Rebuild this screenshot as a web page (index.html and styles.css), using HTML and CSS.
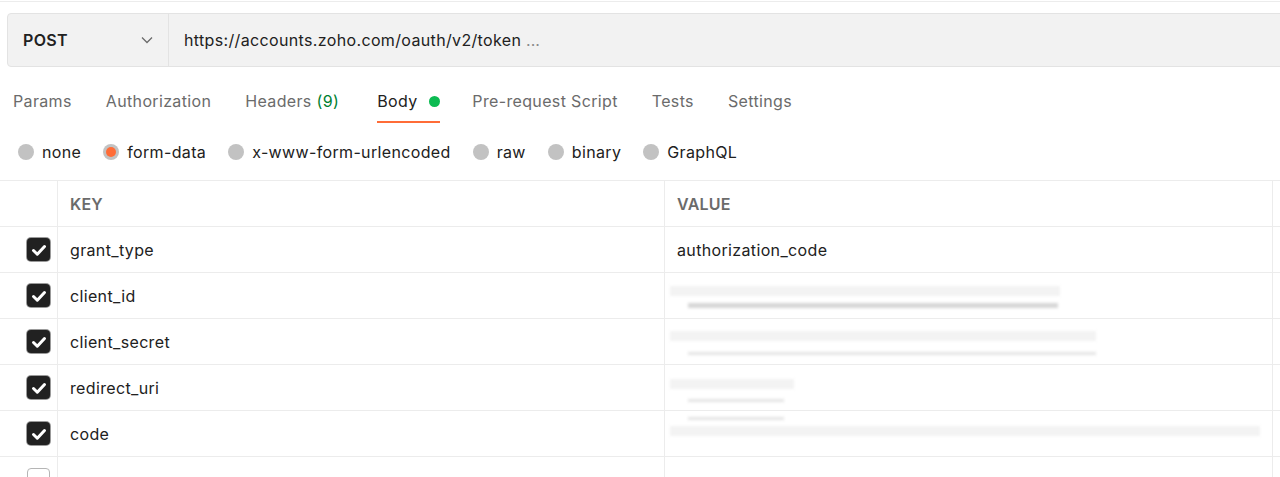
FILE: index.html
```html
<!DOCTYPE html>
<html>
<head>
<meta charset="utf-8">
<link rel="stylesheet" href="styles.css">
</head>
<body>
<div class="topline"></div>
<div class="reqbar">
  <div class="method">
    <span class="method-name">POST</span>
    <svg class="chev" width="12" height="8" viewBox="0 0 12 8"><path d="M1 1.5 L6 6.5 L11 1.5" fill="none" stroke="#6b6b6b" stroke-width="1.3"/></svg>
  </div>
  <div class="url">https://accounts.zoho.com/oauth/v2/token <span class="dots">...</span></div>
</div>
<nav class="tabs">
  <div class="tab">Params</div>
  <div class="tab">Authorization</div>
  <div class="tab">Headers <span class="count">(9)</span></div>
  <div class="tab active">Body <span class="dot"></span></div>
  <div class="tab">Pre-request Script</div>
  <div class="tab">Tests</div>
  <div class="tab">Settings</div>
</nav>
<div class="radios">
  <label class="radio"><span class="circle"></span>none</label>
  <label class="radio"><span class="circle on"></span>form-data</label>
  <label class="radio"><span class="circle"></span>x-www-form-urlencoded</label>
  <label class="radio"><span class="circle"></span>raw</label>
  <label class="radio"><span class="circle"></span>binary</label>
  <label class="radio"><span class="circle"></span>GraphQL</label>
</div>
<div class="table">
  <div class="cell chk"></div><div class="cell head">KEY</div><div class="cell head">VALUE</div><div class="cell end"></div>

  <div class="cell chk"><span class="box"><svg width="22" height="22" viewBox="0 0 22 22"><path d="M5.5 11.5 L9.3 15.2 L16.5 7.5" fill="none" stroke="#fff" stroke-width="3" stroke-linecap="round" stroke-linejoin="round"/></svg></span></div>
  <div class="cell">grant_type</div><div class="cell">authorization_code</div><div class="cell end"></div>

  <div class="cell chk"><span class="box"><svg width="22" height="22" viewBox="0 0 22 22"><path d="M5.5 11.5 L9.3 15.2 L16.5 7.5" fill="none" stroke="#fff" stroke-width="3" stroke-linecap="round" stroke-linejoin="round"/></svg></span></div>
  <div class="cell">client_id</div>
  <div class="cell blurcell">
    <div class="blur b-row2">
      <div class="bar faint w390"></div>
      <div class="bar dark w370 ind"></div>
    </div>
  </div>
  <div class="cell end"></div>

  <div class="cell chk"><span class="box"><svg width="22" height="22" viewBox="0 0 22 22"><path d="M5.5 11.5 L9.3 15.2 L16.5 7.5" fill="none" stroke="#fff" stroke-width="3" stroke-linecap="round" stroke-linejoin="round"/></svg></span></div>
  <div class="cell">client_secret</div>
  <div class="cell blurcell">
    <div class="blur b-row3">
      <div class="bar faint w426"></div>
      <div class="bar mid w408 ind"></div>
    </div>
  </div>
  <div class="cell end"></div>

  <div class="cell chk"><span class="box"><svg width="22" height="22" viewBox="0 0 22 22"><path d="M5.5 11.5 L9.3 15.2 L16.5 7.5" fill="none" stroke="#fff" stroke-width="3" stroke-linecap="round" stroke-linejoin="round"/></svg></span></div>
  <div class="cell">redirect_uri</div>
  <div class="cell blurcell">
    <div class="blur b-row4">
      <div class="bar faint w124"></div>
      <div class="bar mid w96 ind"></div>
    </div>
  </div>
  <div class="cell end"></div>

  <div class="cell chk"><span class="box"><svg width="22" height="22" viewBox="0 0 22 22"><path d="M5.5 11.5 L9.3 15.2 L16.5 7.5" fill="none" stroke="#fff" stroke-width="3" stroke-linecap="round" stroke-linejoin="round"/></svg></span></div>
  <div class="cell">code</div>
  <div class="cell blurcell">
    <div class="blur b-row5">
      <div class="bar mid w96 ind"></div>
      <div class="bar faint w590"></div>
    </div>
  </div>
  <div class="cell end"></div>

  <div class="cell chk"><span class="box empty"></span></div>
  <div class="cell"></div><div class="cell"></div><div class="cell end"></div>
</div>
</body>
</html>
```
FILE: styles.css
```css
* { box-sizing: border-box; }
html, body { margin: 0; padding: 0; background: #fff; overflow: hidden; }
body {
  font-family: Inter, "Noto Sans", sans-serif;
  font-size: 16px;
  letter-spacing: 0.35px;
  color: #212121;
  width: 1280px;
  height: 477px;
}
.topline {
  height: 2px;
  border-bottom: 1px solid #ececec;
}
.reqbar {
  margin: 11px -20px 0 7px;
  height: 54px;
  display: flex;
  background: #f2f2f2;
  border: 1px solid #e3e3e3;
  border-radius: 4px;
}
.method {
  width: 161px;
  display: flex;
  align-items: center;
  justify-content: space-between;
  padding: 0 15px 0 15px;
  border-right: 1px solid #e3e3e3;
}
.method-name { font-weight: 600; font-size: 16px; color: #212121; }
.chev { display: block; }
.url {
  display: flex;
  align-items: center;
  padding-left: 15px;
  color: #212121;
  white-space: pre;
}
.dots { color: #8a8a8a; letter-spacing: 0; }
.tabs {
  display: flex;
  gap: 34px;
  padding-left: 13px;
  margin-top: 10px;
}
.tab {
  padding: 12px 0 8px;
  line-height: 24px;
  border-bottom: 2px solid transparent;
  color: #6b6b6b;
  display: flex;
  align-items: center;
  white-space: pre;
}
.tab.active { color: #212121; border-bottom-color: #ff6c37; margin-left: 4px; margin-right: -2px; }
.count { color: #007f31; }
.dot {
  width: 11px; height: 11px; border-radius: 50%;
  background: #0cbb52; margin-left: 7px;
}
.radios {
  display: flex;
  gap: 22px;
  padding-left: 18px;
  margin-top: 17px;
  height: 24px;
}
.radio {
  display: flex;
  align-items: center;
  gap: 8px;
  color: #212121;
  line-height: 24px;
}
.circle {
  width: 16px; height: 16px; border-radius: 50%;
  background: #c2c2c2;
  display: inline-flex; align-items: center; justify-content: center;
}
.circle.on::after {
  content: "";
  width: 10px; height: 10px; border-radius: 50%;
  background: #ff6c37;
}
.table {
  margin-top: 16px;
  display: grid;
  grid-template-columns: 58px 607px 608px 1fr;
  grid-auto-rows: 46px;
  border-top: 1px solid #ececec;
}
.cell {
  border-bottom: 1px solid #ececec;
  border-right: 1px solid #ececec;
  display: flex;
  align-items: center;
  padding-left: 12px;
  color: #212121;
}
.cell.end { border-right: none; padding: 0; }
.cell.chk { padding: 0 7px 0 0; justify-content: flex-end; }
.head { font-weight: 600; color: #6b6b6b; font-size: 16px; letter-spacing: 0.2px; }
.box {
  width: 23px; height: 23px; border-radius: 4px;
  background: #212121;
  box-shadow: 0 0 0 1px #9a9a9a;
  display: flex; align-items: center; justify-content: center;
}
.box svg { display: block; }
.box.empty {
  background: #fff;
  box-shadow: none;
  border: 1.5px solid #b5b5b5;
}
.blurcell { padding-left: 5px; align-items: flex-start; }
.blur {
  filter: blur(1.6px);
  display: flex;
  flex-direction: column;
}
.bar { height: 6px; }
.bar.faint { background: #f3f3f3; height: 10px; }
.bar.dark { background: #d6d6d6; height: 5px; }
.bar.mid { background: #e4e4e4; height: 3px; }
.ind { margin-left: 18px; }
.b-row2 { padding-top: 13px; gap: 7px; }
.b-row3 { padding-top: 12px; gap: 11px; }
.b-row4 { padding-top: 14px; gap: 10px; }
.b-row5 { padding-top: 6px; gap: 6px; }
.w390 { width: 390px; }
.w370 { width: 370px; }
.w426 { width: 426px; }
.w408 { width: 408px; }
.w124 { width: 124px; }
.w96 { width: 96px; }
.w590 { width: 590px; }
```
